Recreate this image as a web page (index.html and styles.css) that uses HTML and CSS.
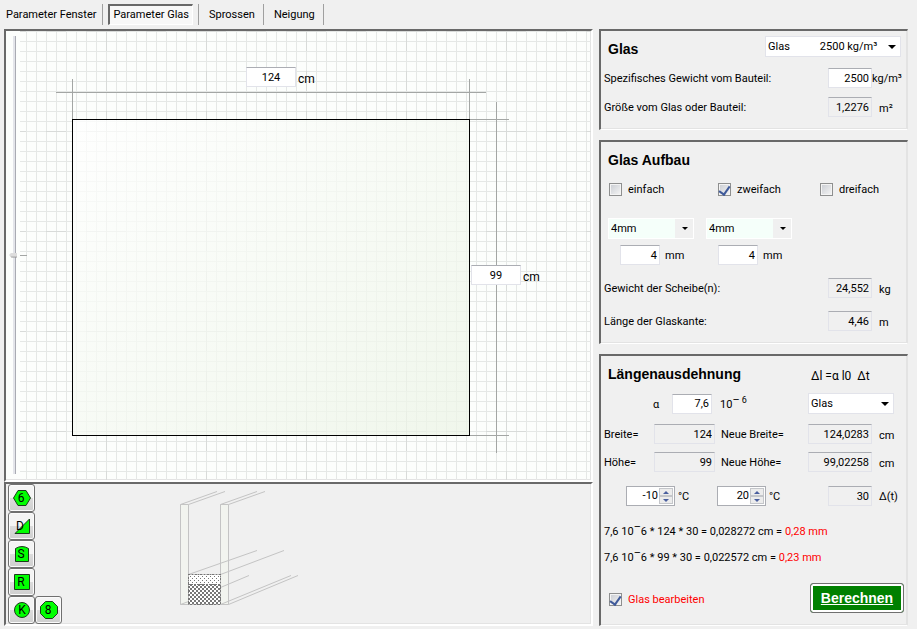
FILE: index.html
```html
<!DOCTYPE html>
<html lang="de">
<head>
    <meta charset="UTF-8">
    <meta name="viewport" content="width=device-width, initial-scale=1.0">
    <title>Parameter Glas</title>
    <link rel="stylesheet" href="styles.css">
</head>
<body>
    <nav class="tabs">
        <button type="button" class="tab">Parameter Fenster</button>
        <button type="button" class="tab active">Parameter Glas</button>
        <button type="button" class="tab">Sprossen</button>
        <button type="button" class="tab">Neigung</button>
    </nav>

    <main class="layout">
        <div class="left">
            <section class="panel drawing">
                <input type="range" class="slider" min="0" max="100" value="50" aria-label="Position">
                <div class="canvas">
                    <svg class="plan" width="100%" height="100%">
                        <defs>
                            <pattern id="grid10" width="10" height="10" x="6" y="0" patternUnits="userSpaceOnUse">
                                <path d="M0 .5H10M.5 0V10" stroke="#e5e8e6" fill="none"/>
                            </pattern>
                            <pattern id="grid100" width="100" height="100" x="-14" y="0" patternUnits="userSpaceOnUse">
                                <path d="M0 .5H100M.5 0V100" stroke="#d8dbd9" stroke-dasharray="20 20" fill="none"/>
                            </pattern>
                            <linearGradient id="glass" x1="0" y1="0" x2="1" y2="1">
                                <stop offset="0" stop-color="#ffffff"/>
                                <stop offset="1" stop-color="#ecf4e6"/>
                            </linearGradient>
                        </defs>
                        <rect width="100%" height="100%" fill="url(#grid10)"/>
                        <rect width="100%" height="100%" fill="url(#grid100)"/>
                        <rect x="52.5" y="88.5" width="397" height="316" fill="url(#glass)" fill-opacity=".75" stroke="#000"/>
                        <path d="M36 61.5H466M52.5 48V88M449.5 48V88M476.5 71V422M450 88.5H489M450 404.5H489M0 224.5H7" stroke="#a3a6a4" fill="none"/>
                    </svg>
                    <div class="dim dim-width">
                        <input type="text" id="width" value="124">
                        <label for="width">cm</label>
                    </div>
                    <div class="dim dim-height">
                        <input type="text" id="height" value="99">
                        <label for="height">cm</label>
                    </div>
                </div>
            </section>

            <section class="panel shapes">
                <div class="shape-buttons">
                    <button type="button" aria-label="Sechseck">
                        <svg width="20" height="20"><path d="M1.500 10L6 2.500H14L18.500 10L14 17.500H6Z"/><text x="9" y="14">6</text></svg>
                    </button>
                    <button type="button" aria-label="Dreieck">
                        <svg width="20" height="20"><path d="M3 17.500L17.500 3V17.500Z"/><text x="8" y="14">D</text></svg>
                    </button>
                    <button type="button" aria-label="Segment">
                        <svg width="20" height="20"><path d="M3.500 17.500V4.500Q10 .5 16.500 4.500V17.500Z"/><text x="9" y="14">S</text></svg>
                    </button>
                    <button type="button" aria-label="Rechteck">
                        <svg width="20" height="20"><path d="M2.500 2.500H17.500V17.500H2.500Z"/><text x="9" y="14">R</text></svg>
                    </button>
                    <button type="button" aria-label="Kreis">
                        <svg width="20" height="20"><circle cx="10" cy="10" r="7.500"/><text x="10" y="14">K</text></svg>
                    </button>
                    <button type="button" aria-label="Achteck">
                        <svg width="20" height="20"><path d="M6.500 1.500H13.500L18.500 6.500V13.500L13.500 18.500H6.500L1.500 13.500V6.500Z"/><text x="9" y="14">8</text></svg>
                    </button>
                </div>
                <svg class="section-view" width="120" height="116">
                    <defs>
                        <pattern id="dots" width="4" height="4" patternUnits="userSpaceOnUse">
                            <rect width="4" height="4" fill="#fff"/>
                            <path d="M0 0h1v1H0zM2 2h1v1H2z" fill="#777"/>
                        </pattern>
                        <pattern id="checker" width="4" height="4" patternUnits="userSpaceOnUse">
                            <rect width="4" height="4" fill="#fff"/>
                            <path d="M0 0h2v2H0zM2 2h2v2H2z" fill="#777"/>
                        </pattern>
                    </defs>
                    <g fill="#f2f4ef" stroke="#c4c4c4">
                        <path d="M.5 14.500H8.500V114.500H.5ZM40.500 14.500H48.500V114.500H40.500Z"/>
                        <path d="M.5 14.500L37 1.500M8.500 14.500L45 1.500M40.500 14.500L77 1.500M48.500 14.500L85 1.500M8.500 84.500L77 60.500M40.500 84.500L104 60.500M40.500 97.500L69 85.500M40.500 114.500L111 85.500M48.500 114.500L118 85.500M.5 114.500L8.500 111.500" fill="none"/>
                    </g>
                    <rect x="8" y="84" width="33" height="10" fill="url(#dots)"/>
                    <rect x="8" y="94" width="33" height="21" fill="url(#checker)"/>
                    <path d="M8.500 84.500H40.500V114.500H8.500ZM8 94.500H41" fill="none" stroke="#777" stroke-dasharray="2 1"/>
                </svg>
            </section>
        </div>

        <form class="right">
            <section class="panel group glas">
                <div class="row title-row">
                    <h2>Glas</h2>
                    <span class="select select-wide">
                        <select aria-label="Material">
                            <option>Glas&nbsp;&nbsp;&nbsp;&nbsp;&nbsp;&nbsp;&nbsp;&nbsp;&nbsp;&nbsp;&nbsp;2500 kg/m³</option>
                        </select>
                    </span>
                </div>
                <div class="row">
                    <label for="density" class="grow">Spezifisches Gewicht vom Bauteil:</label>
                    <input type="text" id="density" class="w44" value="2500">
                    <span class="unit tight">kg/m³</span>
                </div>
                <div class="row">
                    <label for="area" class="grow">Größe vom Glas oder Bauteil:</label>
                    <input type="text" id="area" class="w44" value="1,2276" readonly>
                    <span class="unit">m²</span>
                </div>
            </section>

            <section class="panel group aufbau">
                <h2>Glas Aufbau</h2>
                <div class="checks">
                    <label class="check"><input type="checkbox"><span>einfach</span></label>
                    <label class="check"><input type="checkbox" checked><span>zweifach</span></label>
                    <label class="check"><input type="checkbox"><span>dreifach</span></label>
                </div>
                <div class="panes">
                    <span class="select flat">
                        <select aria-label="Scheibe 1"><option>4mm</option></select>
                    </span>
                    <span class="select flat">
                        <select aria-label="Scheibe 2"><option>4mm</option></select>
                    </span>
                    <div class="pane-size">
                        <input type="text" id="pane1" value="4">
                        <label for="pane1">mm</label>
                    </div>
                    <div class="pane-size">
                        <input type="text" id="pane2" value="4">
                        <label for="pane2">mm</label>
                    </div>
                </div>
                <div class="row">
                    <label for="weight" class="grow">Gewicht der Scheibe(n):</label>
                    <input type="text" id="weight" class="w44" value="24,552" readonly>
                    <span class="unit">kg</span>
                </div>
                <div class="row">
                    <label for="edge" class="grow">Länge der Glaskante:</label>
                    <input type="text" id="edge" class="w44" value="4,46" readonly>
                    <span class="unit">m</span>
                </div>
            </section>

            <section class="panel group dehnung">
                <div class="row head-row">
                    <h2>Längenausdehnung</h2>
                    <span class="law">Δl =α l0&nbsp; Δt</span>
                </div>
                <div class="row alpha-row">
                    <label for="alpha" class="alpha">α</label>
                    <input type="text" id="alpha" value="7,6">
                    <span class="power">10<sup class="bar">–</sup><sup> 6</sup></span>
                    <span class="select select-material">
                        <select aria-label="Werkstoff"><option>Glas</option></select>
                    </span>
                </div>
                <div class="row size-row">
                    <label for="w0" class="short">Breite=</label>
                    <input type="text" id="w0" class="w61" value="124" readonly>
                    <label for="w1" class="grow next">Neue Breite=</label>
                    <input type="text" id="w1" class="w64" value="124,0283" readonly>
                    <span class="unit">cm</span>
                </div>
                <div class="row size-row">
                    <label for="h0" class="short">Höhe=</label>
                    <input type="text" id="h0" class="w61" value="99" readonly>
                    <label for="h1" class="grow next">Neue Höhe=</label>
                    <input type="text" id="h1" class="w64" value="99,02258" readonly>
                    <span class="unit">cm</span>
                </div>
                <div class="row temps">
                    <span class="spinner">
                        <input type="number" id="t0" value="-10">
                        <span class="arrows">
                            <button type="button" class="up" aria-label="Mehr"></button>
                            <button type="button" class="down" aria-label="Weniger"></button>
                        </span>
                    </span>
                    <label for="t0" class="degree">°C</label>
                    <span class="spinner">
                        <input type="number" id="t1" value="20">
                        <span class="arrows">
                            <button type="button" class="up" aria-label="Mehr"></button>
                            <button type="button" class="down" aria-label="Weniger"></button>
                        </span>
                    </span>
                    <label for="t1" class="degree grow">°C</label>
                    <input type="text" id="dt" class="w44" value="30" readonly>
                    <label for="dt" class="unit">Δ(t)</label>
                </div>
                <p class="result">7,6 10<sup class="bar">–</sup>6 * 124 * 30 = 0,028272 cm = <span class="red">0,28 mm</span></p>
                <p class="result">7,6 10<sup class="bar">–</sup>6 * 99 * 30 = 0,022572 cm = <span class="red">0,23 mm</span></p>
                <div class="row footer">
                    <label class="check red"><input type="checkbox" checked><span>Glas bearbeiten</span></label>
                    <button type="submit" class="calc">Berechnen</button>
                </div>
            </section>
        </form>
    </main>
</body>
</html>
```

FILE: styles.css
```css
* {
    box-sizing: border-box;
}
body {
    font-family: Roboto, "Liberation Sans", sans-serif;
    font-size: 11px;
    line-height: 14px;
    color: #000;
    background-color: #f0f0f0;
    margin: 0;
    padding: 4px 9px 4px 4px;
    min-height: 100vh;
    display: flex;
    flex-direction: column;
}
input, select, button {
    font: inherit;
    color: inherit;
    margin: 0;
}
h2 {
    font-family: "Liberation Sans", Arial, sans-serif;
    font-size: 14px;
    line-height: 20px;
    margin: 0;
    padding-left: 4px;
}
p {
    margin: 0;
}

/* tabs */
.tabs {
    display: flex;
    height: 21px;
    margin-bottom: 4px;
}
.tab {
    border: none;
    background: none;
    padding: 0 8px 0 10px;
    border-right: 1px solid #a0a0a0;
    white-space: nowrap;
}
.tab:first-child {
    padding: 0 6px 0 2px;
}
.tab.active {
    padding: 0 3px;
    margin: 0 5px;
    border: 1px solid #fff;
    border-top: 2px solid #696969;
    border-left: 2px solid #696969;
    background-color: #f8f8f8;
}
.tab.active + .tab {
    border-left: 1px solid #a0a0a0;
}

.layout {
    flex: 1;
    display: grid;
    grid-template-columns: 1fr 309px;
    column-gap: 6px;
}
.left, .right {
    display: flex;
    flex-direction: column;
    min-width: 0;
}
.right {
    gap: 10px;
}
.panel {
    border: 2px solid;
    border-color: #696969 #fff #fff #696969;
    box-shadow: inset -1px -1px #e3e3e3;
}

/* drawing area */
.drawing {
    flex: 1;
    display: flex;
    background-color: #fcfefc;
}
.slider {
    appearance: none;
    writing-mode: vertical-lr;
    width: 8px;
    margin: 5px 3px 6px;
    background: linear-gradient(to right, transparent 4px, #e3e5ea 4px 6px, #a9abb3 6px 7px, transparent 7px);
}
.slider::-webkit-slider-thumb {
    appearance: none;
    width: 8px;
    height: 5px;
    background: linear-gradient(#ddd 3px, #777);
    clip-path: polygon(0 50%, 30% 0, 100% 0, 100% 100%, 30% 100%);
}
.canvas {
    flex: 1;
    position: relative;
}
.plan {
    position: absolute;
    inset: 0;
}
.dim {
    position: absolute;
    display: flex;
    align-items: center;
    gap: 2px;
}
.dim input {
    width: 50px;
}
.dim label {
    font-size: 12px;
    padding-top: 4px;
}
.dim-width {
    left: 226px;
    top: 36px;
}
.dim-height {
    left: 451px;
    top: 234px;
}

/* shape buttons and glass section */
.shapes {
    display: flex;
    padding-left: 2px;
}
.shape-buttons {
    display: grid;
    grid-template-columns: 27px 27px;
    grid-auto-rows: 28px;
}
.shape-buttons button {
    grid-column: 1;
    display: flex;
    align-items: center;
    justify-content: center;
    padding: 0;
    border: 1px solid #707070;
    border-radius: 3px;
    background: linear-gradient(#f4f4f4 50%, #dcdcdc 50%, #cfcfcf);
    box-shadow: inset 0 0 0 1px #fbfbfb;
}
.shape-buttons button:last-child {
    grid-column: 2;
    grid-row: 5;
}
.shape-buttons svg {
    fill: #00ff00;
    stroke: #1c3a1c;
}
.shape-buttons text {
    font-size: 12px;
    text-anchor: middle;
    fill: #000;
    stroke: none;
}
.section-view {
    margin: 6px 0 0 118px;
}

/* parameter groups */
.group {
    display: flex;
    flex-direction: column;
    padding: 5px 0 12px 3px;
    border-right: 1px solid #e3e3e3;
    border-bottom: 1px solid #fff;
}
.row {
    display: flex;
    align-items: center;
}
.row label, .check span {
    padding-top: 2px;
}
.grow {
    flex: 1;
}
input[type="text"], .spinner {
    height: 20px;
    padding: 0 2px;
    border: 1px solid #e2e3ea;
    border-top-color: #abadb3;
    background-color: #fff;
    text-align: right;
}
.dim input[type="text"] {
    text-align: center;
}
input[type="text"]:read-only {
    background-color: #f0f0f0;
}
.w44 {
    width: 44px;
}
.w61 {
    width: 61px;
}
.w64 {
    width: 64px;
}
.unit {
    width: 35px;
    padding: 3px 0 0 7px;
}
.unit.tight {
    padding: 2px 0 0;
}
.select {
    position: relative;
    display: flex;
    width: 86px;
}
.select select {
    appearance: none;
    width: 100%;
    height: 21px;
    padding: 0 2px;
    border: 1px solid #e2e3ea;
    border-radius: 0;
    background-color: #fff;
}
.select::after {
    content: "";
    position: absolute;
    right: 5px;
    top: 9px;
    border: 4px solid transparent;
    border-top-color: #000;
    border-bottom: none;
    pointer-events: none;
}
.select.flat select {
    border: 1px solid #fff;
    background: linear-gradient(to left, #f0f0f0 18px, #f5fffa 18px);
}
.select.flat::after {
    right: 6px;
    border-width: 3px;
    border-bottom: none;
}

.glas {
    gap: 9px;
}
.title-row {
    align-items: flex-start;
}
.glas h2 {
    flex: 1;
    padding-top: 3px;
}
.select-wide {
    width: 136px;
    margin-right: 6px;
}

.check {
    display: flex;
    align-items: center;
    gap: 6px;
}
.check input {
    appearance: none;
    display: flex;
    justify-content: center;
    width: 13px;
    height: 13px;
    border: 1px solid #8e8f8f;
    background: linear-gradient(135deg, #c9ccd2, #f6f6f6);
    box-shadow: inset 0 0 0 1px #f4f4f4;
}
.check input:checked::after {
    content: "";
    width: 5px;
    height: 9px;
    border: solid #3f5a9a;
    border-width: 0 2px 2px 0;
    transform: rotate(35deg);
}
.checks {
    display: grid;
    grid-template-columns: 109px 102px auto;
    padding: 11px 0 21px 5px;
}
.aufbau {
    padding-top: 8px;
}
.aufbau .row {
    margin-top: 13px;
}
.panes {
    display: grid;
    grid-template-columns: 86px 86px;
    gap: 6px 12px;
    padding-left: 4px;
}
.pane-size {
    display: flex;
    align-items: center;
    gap: 5px;
    padding-left: 12px;
}
.pane-size label {
    padding-top: 2px;
}
.pane-size input {
    width: 40px;
}

.dehnung {
    flex: 1;
    padding-top: 8px;
}
.head-row {
    justify-content: space-between;
    margin-bottom: 9px;
}
.law {
    width: 96px;
    padding-top: 3px;
    font-size: 12px;
}
.alpha-row {
    margin-bottom: 10px;
}
.alpha {
    width: 68px;
    padding-left: 49px;
}
.alpha-row input {
    width: 40px;
}
.power {
    flex: 1;
    padding: 3px 0 0 8px;
}
sup {
    font-size: 9px;
    line-height: 0;
}
sup.bar {
    font-size: 11px;
}
.select-material {
    margin-right: 13px;
}
.short {
    width: 50px;
}
.next {
    padding-left: 6px;
}
.size-row {
    margin-bottom: 8px;
}
.temps {
    padding: 6px 0 0 22px;
    margin-bottom: 19px;
}
.spinner {
    display: flex;
    width: 49px;
    padding: 0;
    border-color: #abadb3;
}
.spinner input {
    appearance: textfield;
    flex: 1;
    min-width: 0;
    padding: 0;
    border: none;
    background: none;
    text-align: right;
}
.spinner input::-webkit-inner-spin-button {
    display: none;
}
.arrows {
    display: flex;
    flex-direction: column;
    width: 16px;
    padding: 1px;
}
.arrows button {
    flex: 1;
    display: flex;
    align-items: center;
    justify-content: center;
    padding: 0;
    border: 1px solid #c4c6ca;
    background-color: #ececec;
}
.arrows button::after {
    content: "";
    border: 3px solid transparent;
}
.arrows .up::after {
    border-top: none;
    border-bottom-color: #4a5f9e;
}
.arrows .down::after {
    border-bottom: none;
    border-top-color: #4a5f9e;
}
.degree {
    width: 42px;
    padding: 3px 0 0 3px;
}
.result {
    margin-bottom: 12px;
}
.red {
    color: #ff0000;
}
.footer {
    justify-content: space-between;
    padding: 6px 3px 0 5px;
}
.calc {
    width: 94px;
    height: 30px;
    padding: 0;
    border: 1px solid #707070;
    border-radius: 3px;
    background-color: #008000;
    box-shadow: inset 0 0 0 2px #fff;
    color: #fff;
    font-family: "Liberation Sans", Arial, sans-serif;
    font-size: 14px;
    font-weight: bold;
    text-decoration: underline;
}
```
